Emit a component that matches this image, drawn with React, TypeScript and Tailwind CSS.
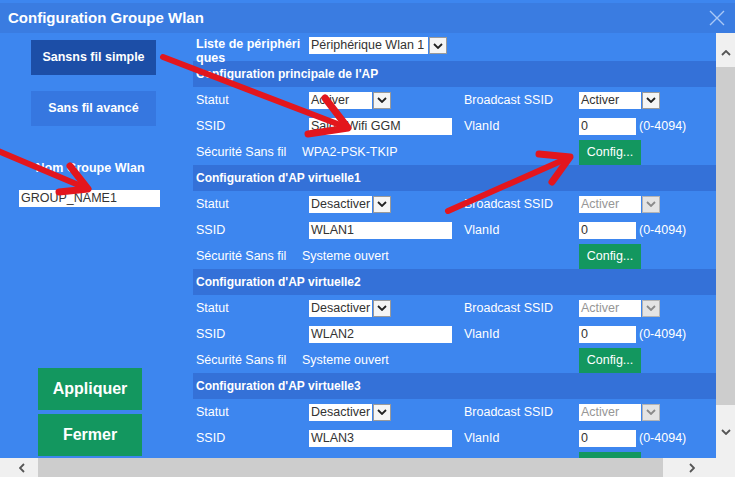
import React from "react";

const sections = [
  { title: "Configuration principale de l'AP", statut: "Activer", ssid: "Salon Wifi GGM", secu: "WPA2-PSK-TKIP", bcastOff: false },
  { title: "Configuration d'AP virtuelle1", statut: "Desactiver", ssid: "WLAN1", secu: "Systeme ouvert", bcastOff: true },
  { title: "Configuration d'AP virtuelle2", statut: "Desactiver", ssid: "WLAN2", secu: "Systeme ouvert", bcastOff: true },
  { title: "Configuration d'AP virtuelle3", statut: "Desactiver", ssid: "WLAN3", secu: "Systeme ouvert", bcastOff: true, last: true },
];

function Chev({ dir, color = "#2a2a2a" }: { dir: "up" | "down" | "left" | "right"; color?: string }) {
  const d = {
    down: "M1 1 L5 5 L9 1",
    up: "M1 5 L5 1 L9 5",
    left: "M5 1 L1 5 L5 9",
    right: "M1 1 L5 5 L1 9",
  }[dir];
  const vertical = dir === "up" || dir === "down";
  return (
    <svg width={vertical ? 10 : 6} height={vertical ? 6 : 10} viewBox={vertical ? "0 0 10 6" : "0 0 6 10"}>
      <path d={d} fill="none" stroke={color} strokeWidth="1.8" />
    </svg>
  );
}

function Select({ value, boxW, off }: { value: string; boxW: string; off?: boolean }) {
  return (
    <div className="flex h-[17px] gap-[1px]">
      <div className={`${boxW} h-full bg-white pl-[2px] text-[12.5px] leading-[17px] ${off ? "text-[#969696]" : "text-[#333]"}`}>{value}</div>
      <div className={`w-[18px] h-full flex items-center justify-center border ${off ? "bg-[#e4e4e4] border-[#b4b4b4]" : "bg-[#f5f5f5] border-[#9a9a9a]"}`}>
        <Chev dir="down" color={off ? "#8a8a8a" : "#222"} />
      </div>
    </div>
  );
}

function Input({ value, w }: { value: string; w: string }) {
  return <div className={`${w} h-[17px] bg-white pl-[2px] text-[12.5px] leading-[17px] text-[#333]`}>{value}</div>;
}

function Row({ children }: { children: React.ReactNode }) {
  return <div className="flex items-center h-[26px] text-[12.5px] text-white">{children}</div>;
}

function Section({ s }: { s: (typeof sections)[number] }) {
  return (
    <div>
      <div className="h-[26px] bg-[#3471d8] pl-[3px] flex items-center text-[12px] font-bold text-white">{s.title}</div>
      <Row>
        <div className="w-[109px] pl-[3px]">Statut</div>
        <div className="w-[162px] pl-[7px]"><Select value={s.statut} boxW="w-[63px]" /></div>
        <div className="w-[115px]">Broadcast SSID</div>
        <Select value="Activer" boxW="w-[62px]" off={s.bcastOff} />
      </Row>
      <Row>
        <div className="w-[109px] pl-[3px]">SSID</div>
        <div className="w-[162px] pl-[7px]"><Input value={s.ssid} w="w-[143px]" /></div>
        <div className="w-[115px]">VlanId</div>
        <Input value="0" w="w-[57px]" />
        <div className="ml-[3px]">(0-4094)</div>
      </Row>
      {s.last ? (
        // scrolled out of view: only the top of the Config button shows
        <div className="h-[26px] flex items-start pt-[1px]">
          <div className="ml-[386px] w-[62px] h-[25px] bg-[#13975f]" />
        </div>
      ) : (
        <Row>
          <div className="w-[109px] pl-[3px]">Sécurité Sans fil</div>
          <div className="w-[162px]">{s.secu}</div>
          <div className="w-[115px]" />
          <button className="w-[62px] h-[25px] bg-[#13975f] text-white text-[12.5px]">Config...</button>
        </Row>
      )}
    </div>
  );
}

function Arrow({ x1, y1, x2, y2, w1, w2 }: { x1: number; y1: number; x2: number; y2: number; w1: [number, number]; w2: [number, number] }) {
  return (
    <g stroke="#e3161d" fill="none" strokeLinecap="round" strokeLinejoin="round">
      <line x1={x1} y1={y1} x2={x2} y2={y2} strokeWidth="6" />
      <path d={`M${w1[0]} ${w1[1]} L${x2} ${y2} L${w2[0]} ${w2[1]}`} strokeWidth="7" />
    </g>
  );
}

export default function App() {
  return (
    <div className="relative w-[735px] h-[477px] overflow-hidden bg-[#3d86ef] flex flex-col font-['Liberation_Sans',Arial,sans-serif]">
      {/* title bar */}
      <div className="mt-[3px] h-[30px] bg-[#3a7ce1] flex items-center justify-between pl-[8px] pr-[10px]">
        <div className="text-white font-bold text-[15px]">Configuration Groupe Wlan</div>
        <svg width="16" height="16" viewBox="0 0 16 16">
          <path d="M1 1 L15 15 M15 1 L1 15" stroke="#a9c8f6" strokeWidth="1.4" />
        </svg>
      </div>

      <div className="flex h-[425px]">
        <div className="w-[716px] flex overflow-hidden">
          {/* left column */}
          <div className="w-[193px] shrink-0 flex flex-col pt-[7px] pb-[2px]">
            <button className="ml-[31px] w-[125px] h-[35px] bg-[#1c4ea7] text-white font-bold text-[12.5px]">Sansns fil simple</button>
            <button className="ml-[31px] mt-[16px] w-[125px] h-[35px] bg-[#3677e0] text-white font-bold text-[12.5px]">Sans fil avancé</button>
            <div className="mt-[35px] w-[180px] text-center text-white font-bold text-[12.5px] leading-[14px]">Nom Groupe Wlan</div>
            <div className="ml-[19px] mt-[15px] w-[141px] h-[17px] bg-white pl-[2px] text-[12.5px] leading-[17px] text-[#333]">GROUP_NAME1</div>
            <div className="flex-1" />
            <button className="ml-[38px] w-[104px] h-[42px] bg-[#13975f] text-white font-bold text-[16px]">Appliquer</button>
            <button className="ml-[38px] mt-[4px] w-[104px] h-[42px] bg-[#13975f] text-white font-bold text-[16px]">Fermer</button>
          </div>

          {/* right content */}
          <div className="flex-1 overflow-hidden">
            <div className="h-[28px] flex items-start pt-[4px]">
              <div className="w-[116px] pl-[3px] text-white font-bold text-[12.5px] leading-[14px]">
                Liste de périphéri
                <br />
                ques
              </div>
              <Select value="Périphérique Wlan 1" boxW="w-[119px]" />
            </div>
            {sections.map((s) => (
              <Section key={s.title} s={s} />
            ))}
          </div>
        </div>

        {/* vertical scrollbar */}
        <div className="w-[19px] bg-[#f0f0f0] flex flex-col items-center">
          <div className="h-[34px] flex items-center justify-center pt-[6px]">
            <Chev dir="up" color="#555" />
          </div>
          <div className="w-full h-[338px] bg-[#cdcdcd]" />
          <div className="flex-1 flex items-center justify-center">
            <Chev dir="down" color="#555" />
          </div>
        </div>
      </div>

      {/* horizontal scrollbar */}
      <div className="h-[19px] flex bg-[#f0f0f0]">
        <div className="w-[38px] flex items-center justify-center pl-[6px]">
          <Chev dir="left" color="#555" />
        </div>
        <div className="w-[625px] bg-[#cdcdcd]" />
        <div className="w-[53px] flex items-center justify-center pl-[4px]">
          <Chev dir="right" color="#555" />
        </div>
        <div className="w-[19px]" />
      </div>

      {/* red annotation arrows */}
      <svg className="absolute inset-0 pointer-events-none" width="735" height="477">
        <Arrow x1={163} y1={57} x2={348} y2={128} w1={[325, 98]} w2={[308, 134]} />
        <Arrow x1={-4} y1={150} x2={88} y2={189} w1={[70, 166]} w2={[59, 192]} />
        <Arrow x1={448} y1={211} x2={570} y2={157} w1={[539, 154]} w2={[552, 182]} />
      </svg>
    </div>
  );
}
